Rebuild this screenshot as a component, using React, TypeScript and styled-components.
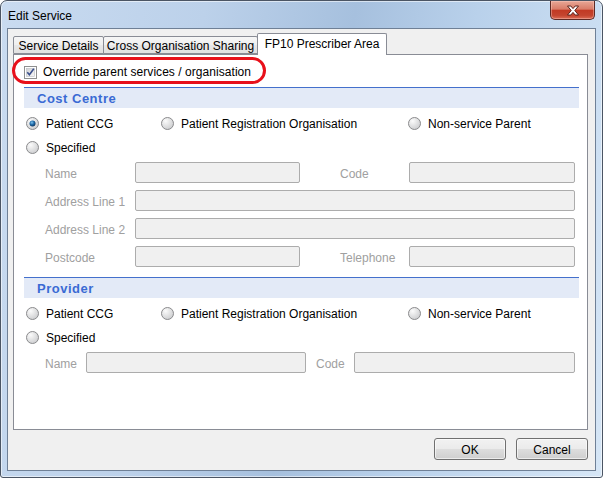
import React from "react";
import styled, { createGlobalStyle } from "styled-components";

const GlobalStyle = createGlobalStyle`
  html, body { margin: 0; padding: 0; background: #ffffff; }
  body { font-family: "Liberation Sans", Arial, sans-serif; font-size: 12px; color: #000; }
  * { box-sizing: border-box; }
`;

const Window = styled.div`
  width: 603px;
  height: 478px;
  border: 1px solid #4b5564;
  border-radius: 7px 7px 3px 3px;
  background: linear-gradient(100deg, #c9dbf0 0%, #bcd1ea 30%, #a6c0de 52%, #b9d1eb 70%, #d6e6f6 100%);
  box-shadow: inset 0 0 0 1px rgba(255, 255, 255, 0.55);
  display: flex;
  flex-direction: column;
  overflow: hidden;
`;

const TitleBar = styled.div`
  height: 27px;
  display: flex;
  justify-content: space-between;
  align-items: flex-start;
  padding: 0 7px 0 7px;
`;

const Title = styled.div`
  font-size: 12px;
  line-height: 12px;
  padding-top: 9px;
  color: #000;
`;

const CloseButton = styled.div`
  width: 45px;
  height: 19px;
  border: 1px solid #5e2a24;
  border-top: none;
  border-radius: 0 0 5px 5px;
  background: linear-gradient(180deg, #e8a796 0%, #d97c68 45%, #c23a24 52%, #c4452f 80%, #dc6c55 100%);
  box-shadow: inset 0 0 0 1px rgba(255, 210, 200, 0.4);
  display: flex;
  align-items: center;
  justify-content: center;
`;

const Client = styled.div`
  flex: 1;
  margin: 0 6px 6px 6px;
  border: 1px solid #6f8096;
  background: #f0f0f0;
  padding: 4px 7px 10px 5px;
  display: flex;
  flex-direction: column;
`;

const TabStrip = styled.div`
  height: 21px;
  display: flex;
  align-items: flex-end;
  padding-left: 1px;
  position: relative;
  z-index: 1;
`;

const Tab = styled.div<{ $w: number; $active?: boolean }>`
  width: ${(p) => p.$w}px;
  height: ${(p) => (p.$active ? 22 : 18)}px;
  margin-bottom: ${(p) => (p.$active ? -1 : 0)}px;
  margin-left: -1px;
  border: 1px solid #898c95;
  border-bottom: ${(p) => (p.$active ? "none" : "1px solid #898c95")};
  border-radius: 2px 2px 0 0;
  background: ${(p) => (p.$active ? "#ffffff" : "linear-gradient(180deg, #f6f6f6 0%, #efefef 50%, #e7e7e7 51%, #e1e1e1 100%)")};
  display: flex;
  align-items: center;
  justify-content: center;
  font-size: 12px;
  padding-top: 1px;
  padding-bottom: ${(p) => (p.$active ? 2 : 0)}px;
  white-space: nowrap;
`;

const Panel = styled.div`
  height: 376px;
  border: 1px solid #898c95;
  background: #ffffff;
  padding: 5px 8px 0 10px;
  display: flex;
  flex-direction: column;
`;

const OverrideRow = styled.div`
  position: relative;
  height: 24px;
  display: flex;
  align-items: center;
  gap: 6px;
`;

const OverrideText = styled.span`
  font-size: 12px;
  letter-spacing: 0.05px;
`;

const Annotation = styled.div`
  position: absolute;
  left: -12px;
  top: -3px;
  width: 254px;
  height: 27px;
  border: 3px solid #e8101a;
  border-radius: 14px;
  pointer-events: none;
`;

const SectionHeader = styled.div<{ $gapTop: number }>`
  margin-top: ${(p) => p.$gapTop}px;
  height: 21px;
  border-top: 1px solid #4470cc;
  background: #e3eaf7;
  color: #3a6ad4;
  font-weight: bold;
  font-size: 13px;
  letter-spacing: 0.5px;
  padding-left: 13px;
  padding-top: 1px;
  display: flex;
  align-items: center;
`;

const RadioGrid = styled.div`
  margin: 3px 0 3px 2px;
  display: grid;
  grid-template-columns: 135px 247px 1fr;
  grid-auto-rows: 24px;
`;

const RadioItem = styled.label`
  display: flex;
  align-items: center;
  gap: 7px;
  font-size: 12px;
  white-space: nowrap;
`;

const RadioText = styled.span`
  padding-top: 2px;
`;

const FieldGrid = styled.div<{ $cols: string }>`
  margin: 0 3px 0 21px;
  display: grid;
  grid-template-columns: ${(p) => p.$cols};
  grid-auto-rows: 21px;
  row-gap: 7px;
`;

const FieldLabel = styled.div<{ $col?: string }>`
  grid-column: ${(p) => p.$col || "auto"};
  color: #a0a0a0;
  font-size: 12px;
  display: flex;
  align-items: center;
  padding-top: 2px;
  white-space: nowrap;
`;

const Input = styled.div<{ $span?: string }>`
  grid-column: ${(p) => p.$span || "auto"};
  height: 21px;
  border: 1px solid #acacac;
  border-radius: 2px;
  background: #f0f0f0;
`;

const Footer = styled.div`
  margin-top: 8px;
  display: flex;
  justify-content: flex-end;
  gap: 10px;
`;

const Button = styled.div`
  width: 72px;
  height: 22px;
  border: 1px solid #707070;
  border-radius: 3px;
  background: linear-gradient(180deg, #f2f2f2 0%, #ebebeb 48%, #dddddd 52%, #cfcfcf 100%);
  box-shadow: inset 0 0 0 1px rgba(255, 255, 255, 0.6);
  display: flex;
  align-items: center;
  justify-content: center;
  padding-top: 2px;
  font-size: 12px;
`;

const CloseGlyph = () => (
  <svg width="14" height="11" viewBox="0 0 14 11">
    <path
      d="M1.5 1 H4.8 L7 3.6 L9.2 1 H12.5 L8.8 5.5 L12.5 10 H9.2 L7 7.4 L4.8 10 H1.5 L5.2 5.5 Z"
      fill="#ffffff"
      stroke="#5a2119"
      strokeWidth="1"
      strokeLinejoin="round"
    />
  </svg>
);

const CheckBox = () => (
  <svg width="13" height="13" viewBox="0 0 13 13">
    <defs>
      <linearGradient id="cbg" x1="0" y1="0" x2="1" y2="1">
        <stop offset="0" stopColor="#cfd1d4" />
        <stop offset="1" stopColor="#f7f7f7" />
      </linearGradient>
    </defs>
    <rect x="0.5" y="0.5" width="12" height="12" fill="#ffffff" stroke="#8e8f8f" />
    <rect x="2.5" y="2.5" width="8" height="8" fill="url(#cbg)" stroke="#b9bcc1" strokeWidth="0.6" />
    <path d="M3.3 6.3 L5.4 8.8 L9.8 2.8" fill="none" stroke="#3a4f8c" strokeWidth="1.6" />
  </svg>
);

const Radio = ({ checked }: { checked?: boolean }) => (
  <svg width="13" height="13" viewBox="0 0 13 13">
    <defs>
      <radialGradient id="rbg" cx="0.35" cy="0.3" r="0.8">
        <stop offset="0" stopColor="#fbfbfb" />
        <stop offset="1" stopColor="#c9cacc" />
      </radialGradient>
      <radialGradient id="rdot" cx="0.4" cy="0.35" r="0.7">
        <stop offset="0" stopColor="#7fc3ee" />
        <stop offset="0.5" stopColor="#1e6aa8" />
        <stop offset="1" stopColor="#0b2f57" />
      </radialGradient>
    </defs>
    <circle cx="6.5" cy="6.5" r="6" fill="url(#rbg)" stroke="#8a8b8d" strokeWidth="1" />
    {checked && <circle cx="6.5" cy="6.5" r="3" fill="url(#rdot)" />}
  </svg>
);

const RadioRows = ({ first }: { first?: boolean }) => (
  <RadioGrid>
    <RadioItem>
      <Radio checked={first} />
      <RadioText>Patient CCG</RadioText>
    </RadioItem>
    <RadioItem>
      <Radio />
      <RadioText>Patient Registration Organisation</RadioText>
    </RadioItem>
    <RadioItem>
      <Radio />
      <RadioText>Non-service Parent</RadioText>
    </RadioItem>
    <RadioItem>
      <Radio />
      <RadioText>Specified</RadioText>
    </RadioItem>
  </RadioGrid>
);

export default function App() {
  return (
    <>
      <GlobalStyle />
      <Window>
        <TitleBar>
          <Title>Edit Service</Title>
          <CloseButton>
            <CloseGlyph />
          </CloseButton>
        </TitleBar>
        <Client>
          <TabStrip>
            <Tab $w={91}>Service Details</Tab>
            <Tab $w={155}>Cross Organisation Sharing</Tab>
            <Tab $w={130} $active>
              FP10 Prescriber Area
            </Tab>
          </TabStrip>
          <Panel>
            <OverrideRow>
              <CheckBox />
              <OverrideText>Override parent services / organisation</OverrideText>
              <Annotation />
            </OverrideRow>

            <SectionHeader $gapTop={3}>Cost Centre</SectionHeader>
            <RadioRows first />
            <FieldGrid $cols="90px 165px 40px 69px 166px">
              <FieldLabel>Name</FieldLabel>
              <Input />
              <FieldLabel $col="4">Code</FieldLabel>
              <Input />
              <FieldLabel>Address Line 1</FieldLabel>
              <Input $span="2 / 6" />
              <FieldLabel>Address Line 2</FieldLabel>
              <Input $span="2 / 6" />
              <FieldLabel>Postcode</FieldLabel>
              <Input />
              <FieldLabel $col="4">Telephone</FieldLabel>
              <Input />
            </FieldGrid>

            <SectionHeader $gapTop={10}>Provider</SectionHeader>
            <RadioRows />
            <FieldGrid $cols="41px 220px 10px 38px 221px">
              <FieldLabel>Name</FieldLabel>
              <Input />
              <FieldLabel $col="4">Code</FieldLabel>
              <Input />
            </FieldGrid>
          </Panel>
          <Footer>
            <Button>OK</Button>
            <Button>Cancel</Button>
          </Footer>
        </Client>
      </Window>
    </>
  );
}
